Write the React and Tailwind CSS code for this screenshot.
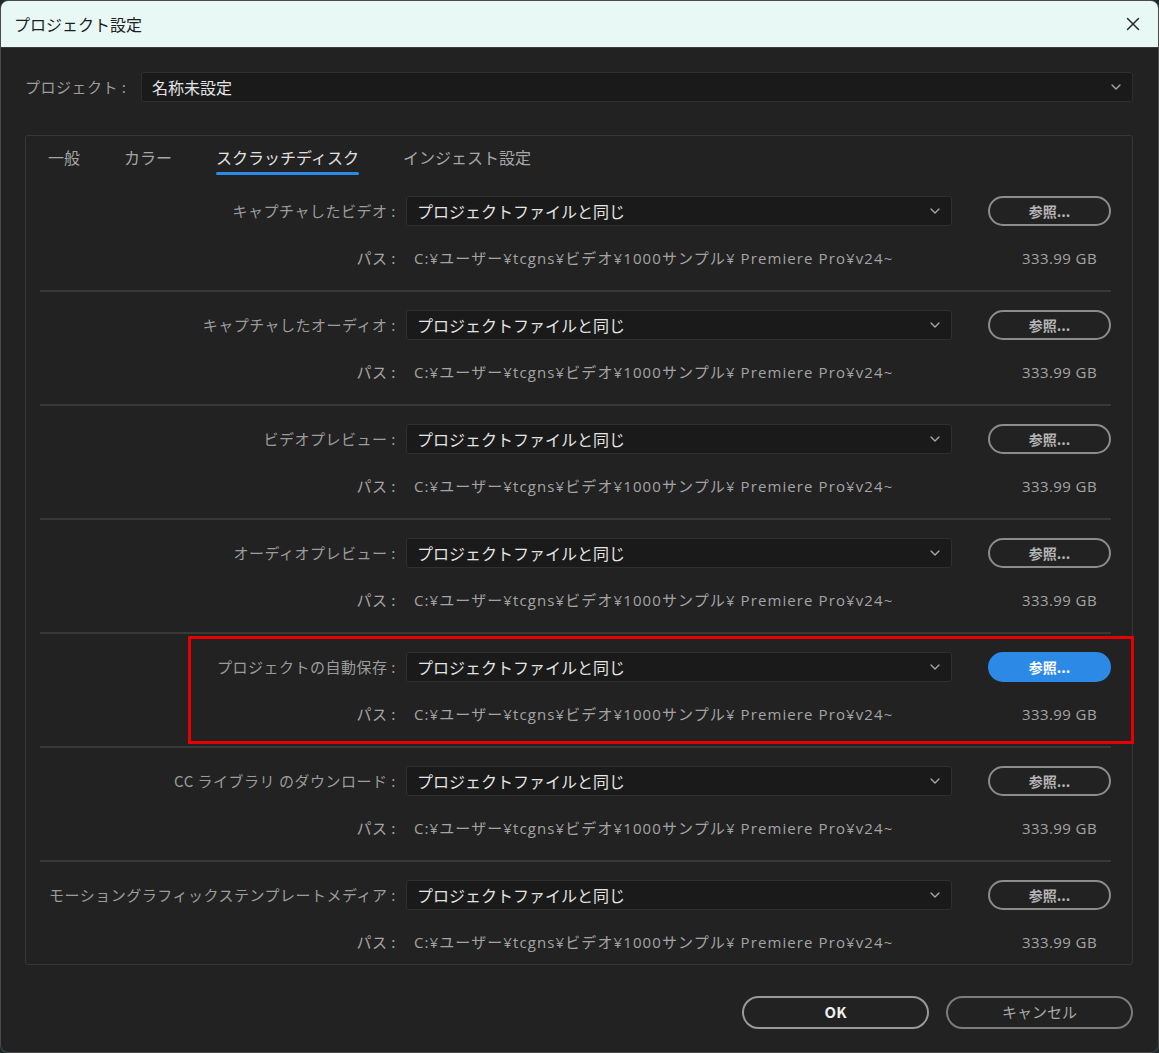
import React from "react";
import { X, ChevronDown } from "lucide-react";

const tabs = ["一般", "カラー", "スクラッチディスク", "インジェスト設定"];

const diskRows = [
  { label: "キャプチャしたビデオ" },
  { label: "キャプチャしたオーディオ" },
  { label: "ビデオプレビュー" },
  { label: "オーディオプレビュー" },
  { label: "プロジェクトの自動保存", active: true },
  { label: "CC ライブラリ のダウンロード" },
  { label: "モーショングラフィックステンプレートメディア" },
];

const pathText = "C:¥ユーザー¥tcgns¥ビデオ¥1000サンプル¥ Premiere Pro¥v24~";

function Select({ value, className = "" }) {
  return (
    <div
      className={`flex items-center justify-between rounded-[3px] border border-[#2f2f2f] bg-[#1a1a1a] pl-[10px] pr-[8px] ${className}`}
    >
      <span className="text-[16px] text-[#e4e4e4]">{value}</span>
      <ChevronDown size={16} strokeWidth={2} className="text-[#a8a8a8]" />
    </div>
  );
}

function DiskRow({ row, last }) {
  return (
    <div>
      <div className="flex h-[30px] items-center">
        <div className="w-[366px] shrink-0 whitespace-nowrap pr-[10px] text-right text-[15px] tracking-[0.5px] text-[#9c9c9c]">
          {row.label} :
        </div>
        <Select value="プロジェクトファイルと同じ" className="h-[30px] w-[546px]" />
        <button
          className={
            row.active
              ? "ml-[36px] h-[30px] w-[123px] rounded-full bg-[#2d89e6] text-[14px] font-bold text-white"
              : "ml-[36px] h-[30px] w-[123px] rounded-full border-2 border-[#8c8c8c] text-[14px] font-bold text-[#b4b4b4]"
          }
        >
          参照...
        </button>
      </div>
      <div className="mt-[21px] flex h-[22px] items-center text-[15px] text-[#a4a4a4]">
        <div className="w-[366px] shrink-0 pr-[10px] text-right tracking-[0.5px]">パス :</div>
        <div className="flex-1 whitespace-nowrap pl-[8px] font-['Open_Sans','Noto_Sans_CJK_JP',sans-serif] tracking-[1.1px]">
          {pathText}
        </div>
        <div className="pr-[14px] font-['Open_Sans',sans-serif] tracking-[0.4px]">333.99 GB</div>
      </div>
      {!last && <div className="mb-[18px] mt-[21px] h-[2px] bg-[#383838]" />}
    </div>
  );
}

export default function App() {
  return (
    <div
      className="relative h-[1053px] w-[1159px] overflow-hidden bg-[#1b2b2a]"
      style={{ fontFamily: '"Noto Sans CJK JP", "Noto Sans", sans-serif' }}
    >
      <div className="flex h-[1053px] w-[1159px] flex-col overflow-hidden rounded-[8px] border border-[#4a4a4a] bg-[#222222]">
        {/* title bar */}
        <div className="flex h-[47px] shrink-0 items-center justify-between border-b border-[#3a3a3a] bg-[#e8f8f5] pl-[13px] pr-[14px]">
          <span className="text-[16px] text-[#1e1e1e]">プロジェクト設定</span>
          <X size={22} strokeWidth={1.6} className="text-[#2a2a2a]" />
        </div>

        <div className="flex flex-1 flex-col pl-[24px] pr-[25px]">
          {/* project selector */}
          <div className="mt-[24px] flex h-[30px] items-center">
            <span className="w-[116px] text-[15px] tracking-[0.5px] text-[#9c9c9c]">プロジェクト :</span>
            <Select value="名称未設定" className="h-[30px] flex-1" />
          </div>

          {/* settings panel */}
          <div className="mt-[33px] h-[830px] rounded-[3px] border border-[#363636] pl-[14px] pr-[21px]">
            <div className="flex gap-[44px] pl-[8px] pt-[9px]">
              {tabs.map((t, i) => (
                <div key={t} className="flex flex-col">
                  <span
                    className={`text-[16px] leading-[24px] ${
                      i === 2 ? "text-[#e0e0e0]" : "text-[#a6a6a6]"
                    }`}
                  >
                    {t}
                  </span>
                  <div
                    className={`mt-[3px] h-[3px] rounded-full ${
                      i === 2 ? "bg-[#2d89e6]" : "bg-transparent"
                    }`}
                  />
                </div>
              ))}
            </div>

            <div className="mt-[21px]">
              {diskRows.map((row, i) => (
                <DiskRow key={row.label} row={row} last={i === diskRows.length - 1} />
              ))}
            </div>
          </div>

          {/* footer */}
          <div className="mt-[31px] flex justify-end gap-[17px]">
            <button className="h-[33px] w-[187px] rounded-full border-2 border-[#9a9a9a] text-[15px] font-bold text-[#eeeeee]">
              OK
            </button>
            <button className="h-[33px] w-[187px] rounded-full border-2 border-[#7c7c7c] text-[15px] text-[#a8a8a8]">
              キャンセル
            </button>
          </div>
        </div>
      </div>

      {/* highlight frame around the auto-save row */}
      <div className="pointer-events-none absolute left-[188px] top-[636px] h-[108px] w-[946px] border-[3px] border-[#e60000]" />
    </div>
  );
}
